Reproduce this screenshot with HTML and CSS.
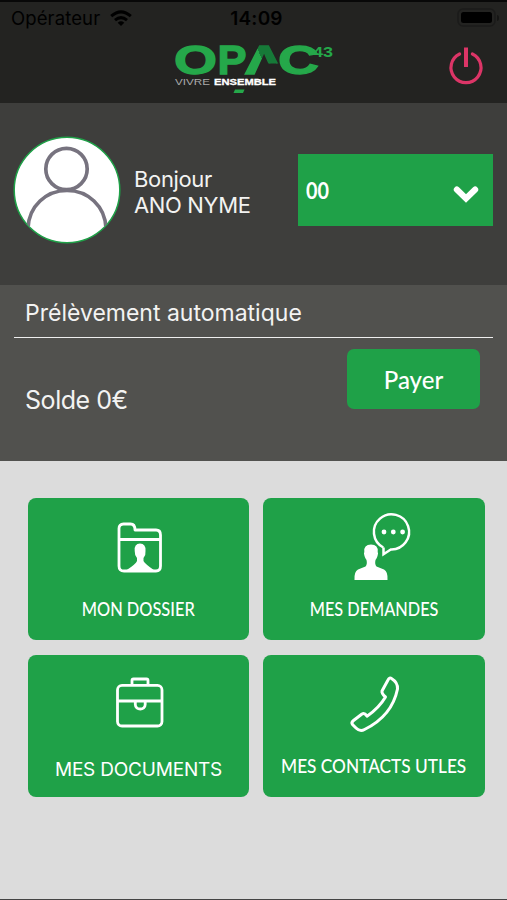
FILE: index.html
```html
<!DOCTYPE html>
<html lang="fr">
<head>
<meta charset="utf-8">
<title>OPAC 43</title>
<link rel="stylesheet" href="styles.css">
</head>
<body>
<div class="app">
  <header class="top">
    <div class="status">
      <div class="carrier"><span>Opérateur</span>
        <svg class="wifi" width="22" height="17" viewBox="0 0 22 17"><g fill="none" stroke="#000" stroke-width="3"><path d="M1.2 6.2Q11-2.5 20.800 6.200"/><path d="M5 10.200Q11 5 17 10.200"/></g><path d="M7.700 12.700Q11 10 14.300 12.700L11 16Z"/></svg>
      </div>
      <span class="clock">14:09</span>
      <svg class="battery" width="42" height="20" viewBox="0 0 42 20"><rect x="1" y="1" width="37" height="17" rx="5" fill="none" stroke="#1b1b1a" stroke-width="1.500"/><rect x="4" y="4" width="31" height="11" rx="2.500"/><path d="M40 7q2 0 2 3t-2 3z" fill="#151514"/></svg>
    </div>
    <div class="brand">
      <svg class="logo" width="160" height="52" viewBox="0 0 160 52">
        <defs>
          <linearGradient id="roof" gradientUnits="userSpaceOnUse" x1="84" y1="25.500" x2="104" y2="16.500"><stop offset=".34" stop-color="#25a84a"/><stop offset=".34" stop-color="#167a38"/></linearGradient>
          <clipPath id="cut"><path d="M66 0H89V34H66ZM89 0H120V20.500H89Z"/></clipPath>
        </defs>
        <g class="mark">
          <text x="0" y="30.500" textLength="43" lengthAdjust="spacingAndGlyphs">O</text>
          <text x="43.500" y="30.500" textLength="29" lengthAdjust="spacingAndGlyphs">P</text>
          <text class="roof" x="71" y="30.500" textLength="38" lengthAdjust="spacingAndGlyphs" clip-path="url(#cut)">Λ</text>
          <text x="104" y="30.500" textLength="41" lengthAdjust="spacingAndGlyphs">C</text>
        </g>
        <text class="sup" x="139" y="14" textLength="20" lengthAdjust="spacingAndGlyphs">43</text>
        <text class="tag" x="1" y="42" textLength="35" lengthAdjust="spacingAndGlyphs">VIVRE</text>
        <text class="tag strong" x="40" y="42" textLength="62" lengthAdjust="spacingAndGlyphs">ENSEMBLE</text>
        <path d="M61 46.500H70.500L69 50H59.500Z" fill="#25a84a"/>
      </svg>
      <svg class="power" width="36" height="42" viewBox="0 0 36 42"><g fill="none" stroke="#dc3567" stroke-width="3.200" stroke-linecap="round"><path d="M11.600 9A15 15 0 1 0 24.400 9"/><path d="M18 2.500V22" stroke-width="4" stroke-linecap="butt"/></g></svg>
    </div>
  </header>

  <section class="user">
    <svg class="avatar" width="108" height="108" viewBox="0 0 108 108">
      <clipPath id="disc"><circle cx="54" cy="54" r="52.500"/></clipPath>
      <circle cx="54" cy="54" r="52.800" fill="#fff" stroke="#1fa148" stroke-width="1.500"/>
      <g clip-path="url(#disc)" fill="none" stroke="#77737f" stroke-width="3.700"><circle cx="53.500" cy="33" r="20.700"/><path d="M15 92C16 70 33 54.500 54 54.500S92 70 93 92"/></g>
    </svg>
    <div class="hello"><div>Bonjour</div><div class="name">ANO NYME</div></div>
    <div class="select"><span>00</span><svg width="26" height="18" viewBox="0 0 26 18"><path d="M3.800 4.500L13 13.500L22.200 4.500" fill="none" stroke="#fff" stroke-width="6" stroke-linecap="round"/></svg></div>
  </section>

  <section class="account">
    <div class="method"><span>Prélèvement automatique</span></div>
    <div class="balance"><span class="amount">Solde 0€</span><button class="pay">Payer</button></div>
  </section>

  <main class="tiles">
    <a class="tile folder">
      <svg width="48" height="54" viewBox="0 0 48 54"><g fill="none" stroke="#fff" stroke-width="2.800" stroke-linejoin="round"><path d="M2 44V7.500Q2 3 6.500 3H13.500Q18 3 18 9H39Q43.500 9 43.500 14V45Q43.500 50 39 50H7Q2 50 2 45ZM2 18.500H43.500"/></g><path fill="#fff" d="M17.700 30Q17 22.500 23 22.500T28.500 30Q29 34 26.500 37V40Q28 43 37.500 49.500H9Q19 43 20 40V37Q17.500 34 17.700 30Z"/></svg>
      <span>MON DOSSIER</span>
    </a>
    <a class="tile requests">
      <svg width="60" height="70" viewBox="0 0 60 70"><path d="M28.300 35.500A17.600 17.600 0 1 1 35.800 37.500L28.500 42.200V35.500" fill="none" stroke="#fff" stroke-width="2.500"/><g fill="#fff"><circle cx="29" cy="20" r="2.400"/><circle cx="38.300" cy="20" r="2.400"/><circle cx="47.600" cy="20" r="2.400"/><path d="M9.300 40Q8.500 32.500 16 32.500T22.700 40Q23.500 41 22.500 44Q22 46 20.500 48Q19.500 52 21.500 54.500L29 57.500Q33 59.500 32.500 68H-.500Q-1 59.500 3 57.500L10.500 54.500Q12.500 52 11.500 48Q10 46 9.500 44Q8.500 41 9.300 40Z"/></g></svg>
      <span>MES DEMANDES</span>
    </a>
    <a class="tile documents">
      <svg width="50" height="54" viewBox="0 0 50 54"><g fill="none" stroke="#fff" stroke-width="2.800"><rect x="2.500" y="10.400" width="44.500" height="40.600" rx="4.500"/><path d="M17 10V5.500Q17 4 18.500 4H31.500Q33 4 33 5.500V10M3 26H47"/><path d="M20.300 26V29.500C20.300 35.500 30.200 35.500 30.200 29.500V26"/></g></svg>
      <span>MES DOCUMENTS</span>
    </a>
    <a class="tile contacts">
      <svg width="54" height="60" viewBox="0 0 54 60"><path d="M42.500 4.500Q49 8.500 48.500 15Q43 42 15.500 55.500Q11 58 7 54L3.500 50.500Q2 48.500 4.500 46.500L13 40Q15.500 38.500 18 42.200Q30 34 36.500 23Q32.500 19.500 33 17L39 6Q40.500 3 42.500 4.500Z" fill="none" stroke="#fff" stroke-width="3" stroke-linejoin="round"/></svg>
      <span>MES CONTACTS UTLES</span>
    </a>
  </main>
</div>
</body>
</html>
```
FILE: styles.css
```css
* { box-sizing: border-box; }
body { margin: 0; background: #dcdcdc; font-family: Inter, "Liberation Sans", sans-serif; }
svg { overflow: visible; flex: none; }
.app { width: 507px; height: 900px; overflow: hidden; display: flex; flex-direction: column; color: #f3f3f2; border-bottom: 1px solid #444; }
.top { height: 103px; background: #232321; border-top: 2px solid #080808; flex: none; }
.status { height: 34px; padding: 0 8px 2px 11px; display: grid; grid-template-columns: 1fr auto 1fr; align-items: center; color: #000; font-size: 18.5px; }
.carrier { display: flex; align-items: center; gap: 10px; }
.carrier span { letter-spacing: .12px; }
.clock { font-weight: 600; font-size: 19px; letter-spacing: .2px; padding-left: 3px; }
.battery { justify-self: end; }
.brand { display: flex; padding: 7px 23px 0 174px; justify-content: space-between; }
.mark { font: bold 41px "Liberation Sans", sans-serif; fill: #25a84a; stroke: #25a84a; stroke-width: 1.3px; }
.roof { fill: url(#roof); stroke: url(#roof); }
.sup { font: bold 14px "Liberation Sans", sans-serif; fill: #25a84a; }
.tag { font: 9px "Liberation Sans", sans-serif; fill: #aaa; }
.strong { font-weight: bold; fill: #fff; stroke: #fff; stroke-width: .3px; }
.power { margin-top: 2px; }
.user { height: 182px; flex: none; background: #3e3e3c; display: flex; align-items: flex-start; padding: 33px 14px 0 13px; }
.hello { margin: 30px 0 0 13px; font-size: 22px; line-height: 26px; letter-spacing: -.35px; flex: 1; }
.select { width: 195px; height: 72px; margin-top: 18px; padding: 0 14px 0 8px; background: #1fa148; display: flex; align-items: center; justify-content: space-between; font: bold 22px Lato, sans-serif; color: #fff; }
.select span { transform: scaleX(.9); transform-origin: left; }
.select svg { margin-top: 7px; }
.account { height: 176px; flex: none; background: #51514e; padding: 0 14px; }
.method { height: 53px; border-bottom: 1.500px solid #eee; padding: 14px 11px 0; font-size: 23px; line-height: 29px; }
.balance { display: flex; justify-content: space-between; padding: 11px 13px 0 11px; }
.amount { font-size: 25px; line-height: 30px; margin-top: 36px; letter-spacing: -.45px; }
.pay { width: 133px; height: 60px; border: 0; border-radius: 7px; background: #1fa148; color: #fff; font: 500 24px Lato, sans-serif; }
.tiles { flex: 1; background: #dcdcdc; padding: 37px 22px 0 28px; display: grid; grid-template-columns: 221px 222px; grid-auto-rows: 142px; gap: 15px 14px; align-content: start; }
.tile { border-radius: 8px; background: #1fa148; color: #fff; display: flex; flex-direction: column; align-items: center; padding-top: 23px; font: 500 19.5px/24px Lato, sans-serif; }
.tile span { margin-top: 22px; white-space: nowrap; transform: scaleX(.84); }
.folder svg { margin-left: 4px; }
.requests { padding-top: 14px; }
.requests svg { margin-left: 22px; }
.tile.requests span { margin-top: 15px; transform: scaleX(.835); }
.documents { font: 19px/24px Inter, sans-serif; letter-spacing: -.2px; padding-top: 20px; }
.documents svg { margin-left: 2px; }
.tile.documents span { margin-top: 29px; transform: none; }
.contacts { padding-top: 19px; }
.contacts svg { margin-left: 3px; }
.tile.contacts span { margin-top: 20px; transform: scaleX(.885); }
```
